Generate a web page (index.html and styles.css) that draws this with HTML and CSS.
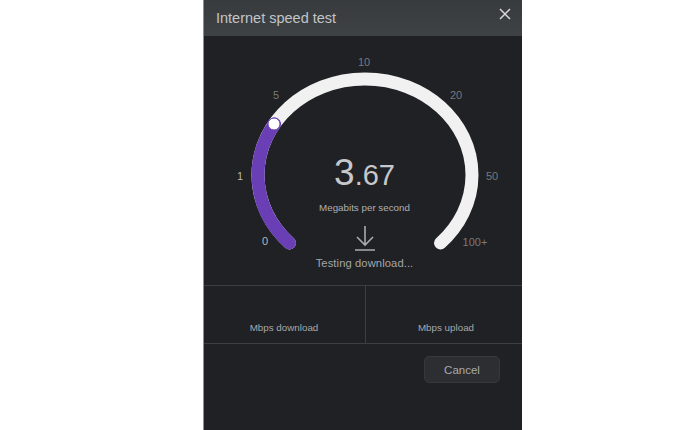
FILE: index.html
```html
<!DOCTYPE html>
<html lang="en">
<head>
<meta charset="utf-8">
<title>Internet speed test</title>
<link rel="stylesheet" href="styles.css">
</head>
<body>
<div class="dialog">
  <header class="head">
    <h1 class="title">Internet speed test</h1>
    <svg class="close" viewBox="0 0 12 12" aria-label="Close"><path d="M1 1 11 11M11 1 1 11"/></svg>
  </header>
  <section class="gauge">
    <svg class="dial" viewBox="0 0 319 249" width="319" height="249">
      <path class="track" d="M85.500 207A107 96 0 1 1 236.500 207"/>
      <path class="fill" d="M85.500 207A107 96 0 0 1 70.500 88"/>
      <ellipse class="knob" cx="70" cy="88" rx="6" ry="6"/>
    </svg>
    <span class="tick t0">0</span>
    <span class="tick t1">1</span>
    <span class="tick t5 dim">5</span>
    <span class="tick t10 dim">10</span>
    <span class="tick t20 dim">20</span>
    <span class="tick t50 dim">50</span>
    <span class="tick t100 dim">100+</span>
    <div class="readout">
      <div class="speed"><span class="int">3</span><span class="dec">.67</span></div>
      <div class="unit">Megabits per second</div>
      <svg class="arrow" viewBox="0 0 22 26"><path d="M11 1V20M3 12 11 20 19 12M1 25H21"/></svg>
      <div class="status">Testing download...</div>
    </div>
  </section>
  <section class="stats">
    <div class="stat stat-down">Mbps download</div>
    <div class="stat stat-up">Mbps upload</div>
  </section>
  <footer class="foot"><button class="cancel">Cancel</button></footer>
</div>
</body>
</html>
```
FILE: styles.css
```css
html, body { margin: 0; height: 100%; background: #fff; overflow: hidden; }
body { font-family: "Liberation Sans", Arial, sans-serif; }
.dialog { width: 318px; height: 430px; margin-left: 204px; background: #202124; display: flex; flex-direction: column; box-shadow: -1px 0 0 #8d8f91; }
.head { height: 36px; flex: none; background: linear-gradient(#383b3d, #3e4245); display: flex; justify-content: space-between; padding: 0 11px 0 12px; box-sizing: border-box; }
.title { margin: 10px 0 0; font-size: 14.5px; line-height: 17px; font-weight: 400; color: #c2c5c8; }
.close { width: 12px; height: 12px; margin-top: 8px; }
.close path { fill: none; stroke: #d5d7d9; stroke-width: 1.5; }
.gauge { position: relative; height: 249px; flex: none; border-bottom: 1px solid #3c3e41; }
.dial { position: absolute; left: 0; top: 0; }
.track, .fill { fill: none; stroke-width: 13; stroke-linecap: round; }
.track { stroke: #f1f1f2; }
.fill { stroke: #6a3fb5; }
.knob { fill: #fff; stroke: #6a3fb5; stroke-width: 1; }
.tick { position: absolute; font-size: 11px; line-height: 13px; color: #b5b7ba; transform: translateX(-50%); }
.dim { color: #77797c; }
.t0 { left: 61px; top: 199px; }
.t1 { left: 36px; top: 134px; }
.t5 { left: 72px; top: 53px; }
.t10 { left: 160px; top: 20px; }
.t20 { left: 252px; top: 53px; }
.t50 { left: 288px; top: 134px; }
.t100 { left: 271px; top: 200px; }
.readout { position: absolute; left: 0; right: 0; top: 115px; display: flex; flex-direction: column; align-items: center; margin-left: 3px; }
.speed { color: #c6c8cb; line-height: 44px; height: 44px; }
.int { font-size: 37px; }
.dec { font-size: 29px; }
.unit { font-size: 9.8px; line-height: 12px; margin-top: 7px; color: #aeb0b3; }
.arrow { width: 22px; height: 26px; margin-top: 11px; }
.arrow path { fill: none; stroke: #a9abae; stroke-width: 1.6; }
.status { font-size: 11.2px; line-height: 13px; margin-top: 6px; color: #a4a6a9; letter-spacing: 0.1px; }
.stats { height: 57px; flex: none; display: flex; border-bottom: 1px solid #3c3e41; }
.stat { box-sizing: border-box; display: flex; justify-content: center; align-items: flex-end; padding-bottom: 9px; font-size: 9.8px; line-height: 12px; color: #a6a8ab; }
.stat-down { width: 162px; border-right: 1px solid #3c3e41; padding-right: 1px; }
.stat-up { flex: 1; padding-left: 4px; }
.foot { display: flex; justify-content: flex-end; padding: 12px 22px 0 0; }
.cancel { width: 76px; height: 27px; padding: 0; font: 11.5px "Liberation Sans", Arial, sans-serif; color: #a9abae; background: #2d2e31; border: 1px solid #36383b; border-radius: 5px; }
```
